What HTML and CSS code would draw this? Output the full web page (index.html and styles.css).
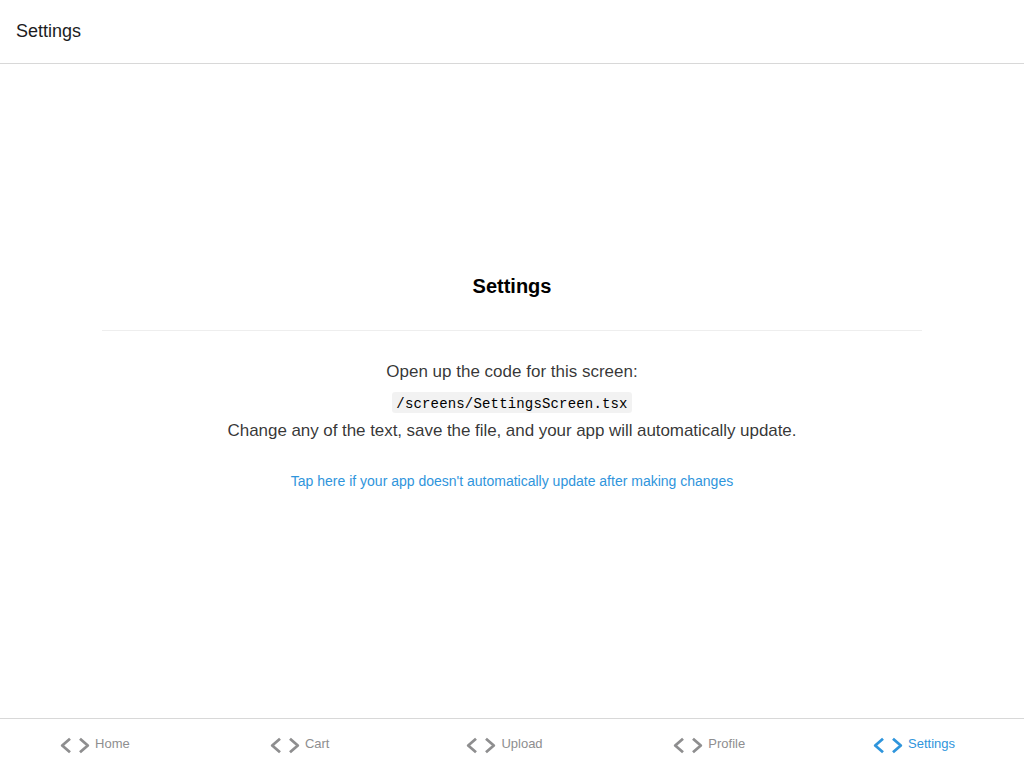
FILE: index.html
```html
<!DOCTYPE html>
<html lang="en">
<head>
<meta charset="utf-8">
<title>Settings</title>
<link rel="stylesheet" href="styles.css">
</head>
<body>
<header class="header"><h1 class="header-title">Settings</h1></header>
<main class="screen">
<h2 class="title">Settings</h2>
<div class="separator"></div>
<p class="copy">Open up the code for this screen:</p>
<code class="path">/screens/SettingsScreen.tsx</code>
<p class="copy instructions">Change any of the text, save the file, and your app will automatically update.</p>
<a class="help">Tap here if your app doesn't automatically update after making changes</a>
</main>
<nav class="tabs">
<a class="tab"><svg class="icon" viewBox="0 0 30 18"><path d="M10 1.8 2.2 8.5l7.8 6.7M20 1.8l7.8 6.7-7.8 6.7"/></svg><span>Home</span></a>
<a class="tab"><svg class="icon" viewBox="0 0 30 18"><path d="M10 1.8 2.2 8.5l7.8 6.7M20 1.8l7.8 6.7-7.8 6.7"/></svg><span>Cart</span></a>
<a class="tab"><svg class="icon" viewBox="0 0 30 18"><path d="M10 1.8 2.2 8.5l7.8 6.7M20 1.8l7.8 6.7-7.8 6.7"/></svg><span>Upload</span></a>
<a class="tab"><svg class="icon" viewBox="0 0 30 18"><path d="M10 1.8 2.2 8.5l7.8 6.7M20 1.8l7.8 6.7-7.8 6.7"/></svg><span>Profile</span></a>
<a class="tab active"><svg class="icon" viewBox="0 0 30 18"><path d="M10 1.8 2.2 8.5l7.8 6.7M20 1.8l7.8 6.7-7.8 6.7"/></svg><span>Settings</span></a>
</nav>
</body>
</html>
```
FILE: styles.css
```css
* { box-sizing: border-box; }
body { margin: 0; height: 767px; display: flex; flex-direction: column; background: #fff; font-family: "Liberation Sans", Arial, sans-serif; }
.header { height: 64px; flex: none; padding: 21px 16px 0; border-bottom: 1px solid #d8d8d8; }
.header-title { margin: 0; font-size: 18px; line-height: 21px; font-weight: 400; color: #1c1c1e; }
.screen { flex: 1; display: flex; flex-direction: column; align-items: center; padding-top: 210px; }
.title { margin: 0; font-size: 20px; line-height: 24px; color: #000; }
.separator { width: 820px; height: 1px; margin: 32px 0 29px; background: #eee; }
.copy { margin: 0; font-size: 17px; line-height: 24px; color: rgba(0,0,0,.8); }
.instructions { letter-spacing: -.062px; }
.path { width: 240px; height: 21px; margin: 8px 0 6px; border-radius: 3px; background: rgba(0,0,0,.05); font: 14px/24px "Liberation Mono", monospace; letter-spacing: .167px; text-align: center; color: #000; }
.help { margin-top: 30px; font-size: 14px; line-height: 16px; color: #2f95dc; }
.tabs { height: 49px; flex: none; display: grid; grid-template-columns: repeat(5, 1fr); border-top: 1px solid #d8d8d8; }
.tab { display: flex; align-items: center; justify-content: center; gap: 5px; padding-right: 15px; color: #8e8e8f; font-size: 13px; }
.tab.active { color: #2f95dc; }
.icon { width: 30px; height: 18px; margin-top: 5px; fill: none; stroke: currentColor; stroke-width: 2.8; stroke-linejoin: round; }
```
